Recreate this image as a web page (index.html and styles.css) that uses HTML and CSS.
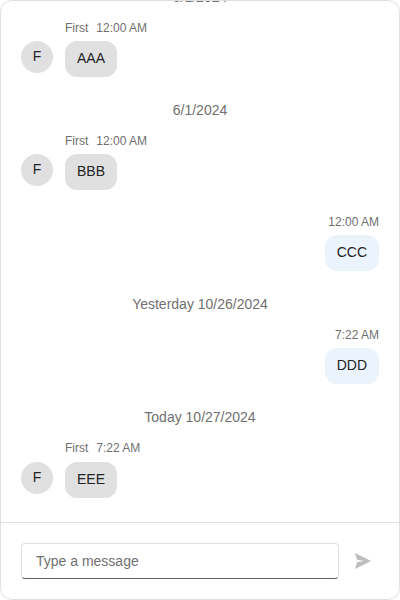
FILE: index.html
```html
<!DOCTYPE html>
<html lang="en">
<head>
<meta charset="utf-8">
<title>Chat</title>
<link rel="stylesheet" href="styles.css">
</head>
<body>
<div class="chat">
  <div class="messages">
    <div class="date">5/1/2024</div>
    <div class="group">
      <div class="avatar">F</div>
      <div class="content">
        <div class="info"><span>First</span><span>12:00 AM</span></div>
        <div class="bubble">AAA</div>
      </div>
    </div>
    <div class="date">6/1/2024</div>
    <div class="group">
      <div class="avatar">F</div>
      <div class="content">
        <div class="info"><span>First</span><span>12:00 AM</span></div>
        <div class="bubble">BBB</div>
      </div>
    </div>
    <div class="group own">
      <div class="content">
        <div class="info"><span>12:00 AM</span></div>
        <div class="bubble">CCC</div>
      </div>
    </div>
    <div class="date">Yesterday 10/26/2024</div>
    <div class="group own">
      <div class="content">
        <div class="info"><span>7:22 AM</span></div>
        <div class="bubble">DDD</div>
      </div>
    </div>
    <div class="date">Today 10/27/2024</div>
    <div class="group">
      <div class="avatar">F</div>
      <div class="content">
        <div class="info"><span>First</span><span>7:22 AM</span></div>
        <div class="bubble">EEE</div>
      </div>
    </div>
  </div>
  <form class="composer">
    <input class="field" type="text" placeholder="Type a message">
    <button class="send" type="button" aria-label="Send">
      <svg width="16" height="16" viewBox="0 0 16 16"><path d="M0 0 16 8 0 16 2 9.3 9 8 2 6.7Z"/></svg>
    </button>
  </form>
</div>
</body>
</html>
```

FILE: styles.css
```css
* { box-sizing: border-box; }
body {
  margin: 0;
  font: 14px/20px "Liberation Sans", Arial, sans-serif;
  color: #242424;
}
.chat {
  display: flex;
  flex-direction: column;
  height: 600px;
  overflow: hidden;
  border: 1px solid #e0e0e0;
  border-radius: 12px;
  background: #fff;
}
.messages {
  flex: 1;
  min-height: 0;
  display: flex;
  flex-direction: column;
  justify-content: flex-end;
  padding: 0 20px 24.4px;
  overflow: hidden;
}
.date {
  flex: none;
  margin-top: 23px;
  text-align: center;
  color: #707070;
}
.group {
  flex: none;
  display: flex;
  gap: 12px;
  margin-top: 13px;
}
.own { justify-content: flex-end; }
.group + .own { margin-top: 24px; }
.avatar {
  width: 32px;
  height: 32px;
  margin-top: 21.2px;
  border-radius: 50%;
  background: #e0e0e0;
  text-align: center;
  line-height: 30px;
}
.content {
  display: flex;
  flex-direction: column;
  align-items: flex-start;
}
.own .content { align-items: flex-end; }
.info {
  display: flex;
  gap: 8px;
  height: 16px;
  margin-bottom: 5.2px;
  font-size: 12px;
  line-height: 16px;
  color: #707070;
}
.bubble {
  height: 36px;
  padding: 8px 12px;
  border-radius: 12px;
  background: #e0e0e0;
  line-height: 18px;
}
.own .bubble { background: #ebf3fc; }
.composer {
  flex: none;
  display: flex;
  align-items: center;
  gap: 8px;
  height: 77px;
  margin: 0;
  padding: 0 20px;
  border-top: 1px solid #e0e0e0;
}
.field {
  flex: 1;
  min-width: 0;
  height: 36px;
  padding: 0 14px;
  border: 1px solid #e0e0e0;
  border-bottom-color: #616161;
  border-radius: 4px;
  font: inherit;
  outline: none;
}
.field::placeholder { color: #707070; opacity: 1; }
.send {
  display: flex;
  align-items: center;
  justify-content: center;
  width: 32px;
  height: 32px;
  padding: 0;
  border: 0;
  background: none;
}
.send svg { fill: #bdbdbd; }
```
